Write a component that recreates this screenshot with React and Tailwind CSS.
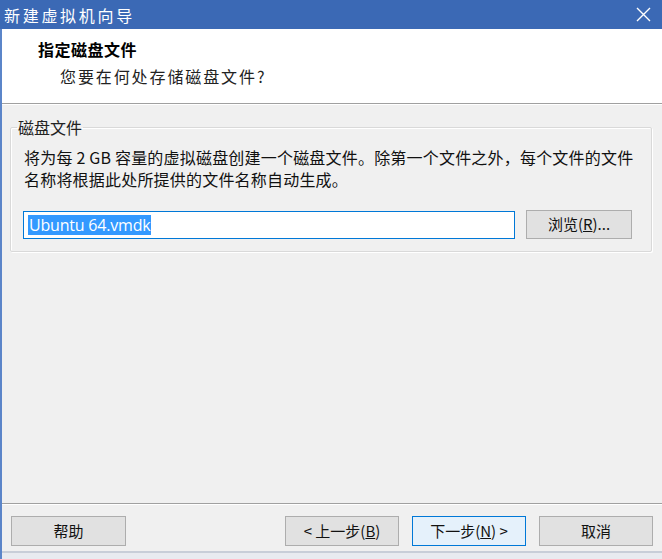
import React from "react";

const font = { fontFamily: '"Noto Sans CJK SC", "Noto Sans", sans-serif' };

function Btn({ children, def, className = "" }) {
  return (
    <div
      className={
        "h-[30px] flex items-center justify-center text-[15px] text-[#111] border " +
        (def ? "border-[#0078d7] bg-[#e5f1fb] " : "border-[#adadad] bg-[#e1e1e1] ") +
        className
      }
    >
      {children}
    </div>
  );
}

export default function App() {
  return (
    <div
      className="w-[662px] h-[559px] flex flex-col bg-[#f0f0f0] overflow-hidden"
      style={font}
    >
      {/* title bar */}
      <div className="h-[29px] bg-[#3b69b5] flex items-center justify-between pl-[4px] pr-[10px] shrink-0">
        <span className="text-white text-[16px] tracking-[2.7px] leading-none">新建虚拟机向导</span>
        <svg width="15" height="15" viewBox="0 0 15 15" className="mr-[1px]">
          <path d="M1 1 L14 14 M14 1 L1 14" stroke="#ffffff" strokeWidth="1.4" />
        </svg>
      </div>

      <div className="flex-1 flex flex-col border-l-[2px] border-[#5b85c9]">
        {/* header */}
        <div className="h-[75px] bg-white border-b border-[#a0a0a0] shrink-0 pt-[9px]">
          <div className="pl-[36px] text-[16px] font-bold text-black leading-[22px] tracking-[0.5px]">
            指定磁盘文件
          </div>
          <div className="pl-[58px] mt-[5px] text-[16px] text-[#222] leading-[22px] tracking-[1.9px]">
            您要在何处存储磁盘文件?
          </div>
        </div>
        <div className="h-px bg-white"></div>

        {/* body */}
        <div className="flex-1 pt-[13px] pl-[8px] pr-[10px]">
          <fieldset className="border border-[#d9d9d9] pb-[12px] rounded-[2px] shadow-[inset_1px_1px_0_#ffffff,1px_1px_0_#ffffff]">
            <legend className="ml-[6px] px-[1px] text-[16px] leading-[18px] text-[#222]">磁盘文件</legend>
            <div className="pl-[13px] pr-[17px]">
              <div className="pt-[10px] text-[16px] leading-[22px] text-[#111] tracking-[0.2px]">
                将为每 2 GB 容量的虚拟磁盘创建一个磁盘文件。除第一个文件之外，每个文件的文件
                <br />
                名称将根据此处所提供的文件名称自动生成。
              </div>
              <div className="mt-[20px] flex items-center gap-[11px] -ml-[1px]">
                <div className="w-[492px] h-[28px] border border-[#0078d7] bg-white flex items-center pl-[4px]">
                  <span
                    className="bg-[#3399ff] text-white text-[16px] leading-[20px] px-[1px]"
                    style={{ fontFamily: '"Open Sans", "Noto Sans", sans-serif', letterSpacing: "-0.2px" }}
                  >
                    Ubuntu 64.vmdk
                  </span>
                </div>
                <div className="w-[106px] h-[29px] border border-[#adadad] bg-[#e1e1e1] flex items-center justify-center text-[15px] text-[#111]">
                  浏览(<span className="underline">R</span>)...
                </div>
              </div>
            </div>
          </fieldset>
        </div>

        {/* footer */}
        <div className="shrink-0">
          <div className="h-px bg-[#a0a0a0]"></div>
          <div className="h-px bg-white"></div>
          <div className="flex items-center pt-[11px] pl-[9px] pr-[9px]">
            <Btn className="w-[115px]">帮助</Btn>
            <div className="flex-1"></div>
            <Btn className="w-[114px]">&lt; 上一步(<span className="underline">B</span>)</Btn>
            <Btn def className="w-[114px] ml-[13px]">下一步(<span className="underline">N</span>) &gt;</Btn>
            <Btn className="w-[114px] ml-[13px]">取消</Btn>
          </div>
          <div className="h-[5px]"></div>
          <div className="h-[2px] bg-[#c8ced8]"></div>
          <div className="h-[6px] bg-[#e8ebf0]"></div>
        </div>
      </div>
    </div>
  );
}
